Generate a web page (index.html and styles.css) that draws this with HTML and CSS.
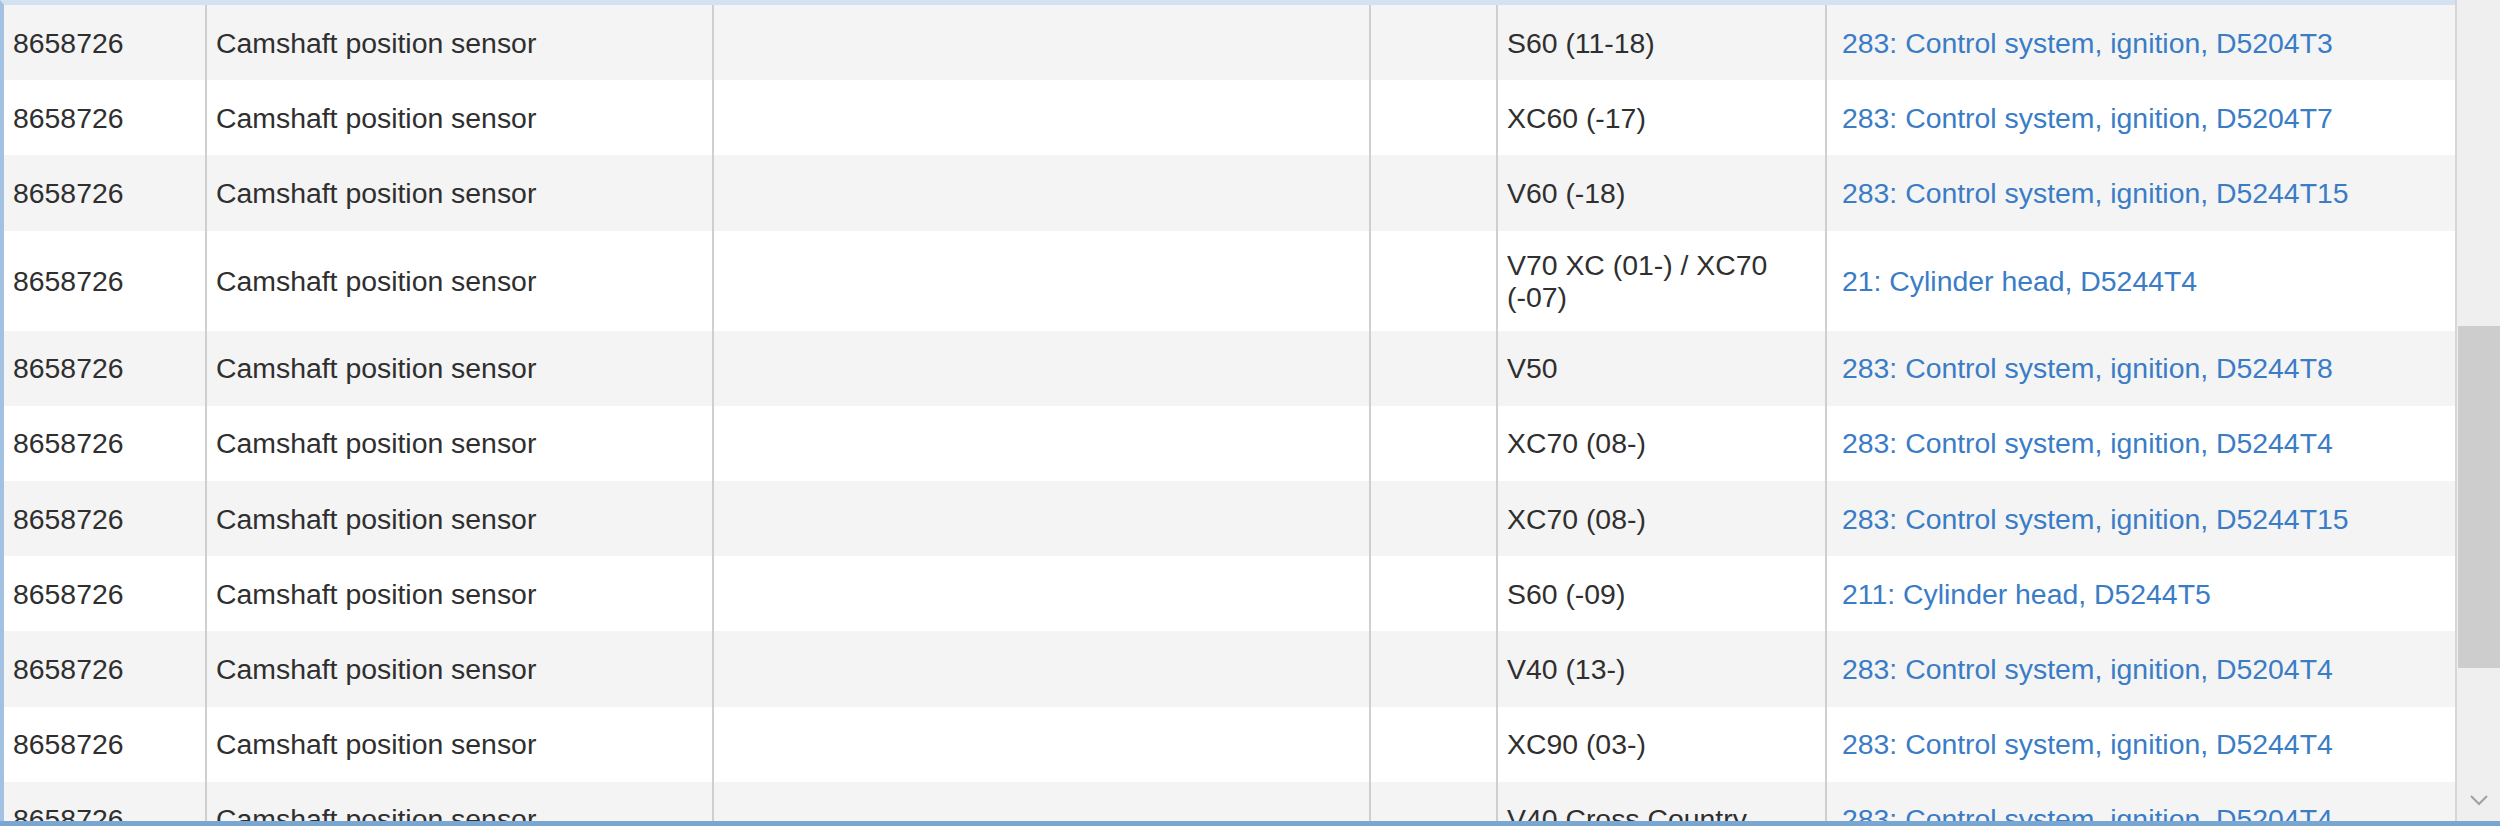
FILE: index.html
```html
<!DOCTYPE html>
<html>
<head>
<meta charset="utf-8">
<link rel="stylesheet" href="styles.css">
</head>
<body>
<div class="frame">
  <div class="main">
    <div class="grid">
      <div class="row odd"><div class="c">8658726</div><div class="c">Camshaft position sensor</div><div class="c"></div><div class="c"></div><div class="c">S60 (11-18)</div><div class="c l"><a href="#">283: Control system, ignition, D5204T3</a></div></div>
      <div class="row"><div class="c">8658726</div><div class="c">Camshaft position sensor</div><div class="c"></div><div class="c"></div><div class="c">XC60 (-17)</div><div class="c l"><a href="#">283: Control system, ignition, D5204T7</a></div></div>
      <div class="row odd"><div class="c">8658726</div><div class="c">Camshaft position sensor</div><div class="c"></div><div class="c"></div><div class="c">V60 (-18)</div><div class="c l"><a href="#">283: Control system, ignition, D5244T15</a></div></div>
      <div class="row"><div class="c">8658726</div><div class="c">Camshaft position sensor</div><div class="c"></div><div class="c"></div><div class="c">V70 XC (01-) / XC70 (-07)</div><div class="c l"><a href="#">21: Cylinder head, D5244T4</a></div></div>
      <div class="row odd"><div class="c">8658726</div><div class="c">Camshaft position sensor</div><div class="c"></div><div class="c"></div><div class="c">V50</div><div class="c l"><a href="#">283: Control system, ignition, D5244T8</a></div></div>
      <div class="row"><div class="c">8658726</div><div class="c">Camshaft position sensor</div><div class="c"></div><div class="c"></div><div class="c">XC70 (08-)</div><div class="c l"><a href="#">283: Control system, ignition, D5244T4</a></div></div>
      <div class="row odd"><div class="c">8658726</div><div class="c">Camshaft position sensor</div><div class="c"></div><div class="c"></div><div class="c">XC70 (08-)</div><div class="c l"><a href="#">283: Control system, ignition, D5244T15</a></div></div>
      <div class="row"><div class="c">8658726</div><div class="c">Camshaft position sensor</div><div class="c"></div><div class="c"></div><div class="c">S60 (-09)</div><div class="c l"><a href="#">211: Cylinder head, D5244T5</a></div></div>
      <div class="row odd"><div class="c">8658726</div><div class="c">Camshaft position sensor</div><div class="c"></div><div class="c"></div><div class="c">V40 (13-)</div><div class="c l"><a href="#">283: Control system, ignition, D5204T4</a></div></div>
      <div class="row"><div class="c">8658726</div><div class="c">Camshaft position sensor</div><div class="c"></div><div class="c"></div><div class="c">XC90 (03-)</div><div class="c l"><a href="#">283: Control system, ignition, D5244T4</a></div></div>
      <div class="row odd"><div class="c">8658726</div><div class="c">Camshaft position sensor</div><div class="c"></div><div class="c"></div><div class="c">V40 Cross Country</div><div class="c l"><a href="#">283: Control system, ignition, D5204T4</a></div></div>
    </div>
  </div>
  <div class="scrollbar">
    <div class="track"><div class="thumb"></div></div>
    <div class="arrow">
      <svg width="20" height="12" viewBox="0 0 20 12"><path d="M2 2 L10 10 L18 2" fill="none" stroke="#a0a0a0" stroke-width="2"/></svg>
    </div>
  </div>
</div>
</body>
</html>
```
FILE: styles.css
```css
html, body {
  margin: 0;
  padding: 0;
  background: #ffffff;
}
.frame {
  width: 2500px;
  height: 826px;
  box-sizing: border-box;
  display: flex;
  border-bottom: 5px solid #7aa6d2;
  overflow: hidden;
  font-family: "Liberation Sans", Arial, sans-serif;
  font-size: 28.4px;
  color: #2f2f2f;
}
.main {
  flex: 1;
  border-top: 5px solid #d2e2f1;
  border-left: 4px solid #a3c2e2;
  overflow: hidden;
}
.grid {
  display: flex;
  flex-direction: column;
}
.row {
  display: grid;
  grid-template-columns: 203px 507px 657px 127px 329px 1fr;
  min-height: 75.2px;
  background: #ffffff;
}
.row.odd {
  background: #f4f4f4;
}
.c {
  display: flex;
  align-items: center;
  padding: 18px 12px 18px 9px;
  line-height: 32px;
  border-right: 2px solid #cfcfcf;
  box-sizing: border-box;
  min-width: 0;
}
.c.l {
  border-right: none;
  padding-left: 15px;
}
.c a {
  color: #3a7cc6;
  text-decoration: none;
}
.scrollbar {
  width: 43px;
  flex: none;
  border-left: 2px solid #d6d6d6;
  background: #efefef;
  display: flex;
  flex-direction: column;
}
.track {
  flex: 1;
  padding-top: 326px;
}
.thumb {
  height: 342px;
  margin-left: 1px;
  background: #cdcdcd;
}
.arrow {
  height: 42px;
  display: flex;
  align-items: center;
  justify-content: center;
}
```
